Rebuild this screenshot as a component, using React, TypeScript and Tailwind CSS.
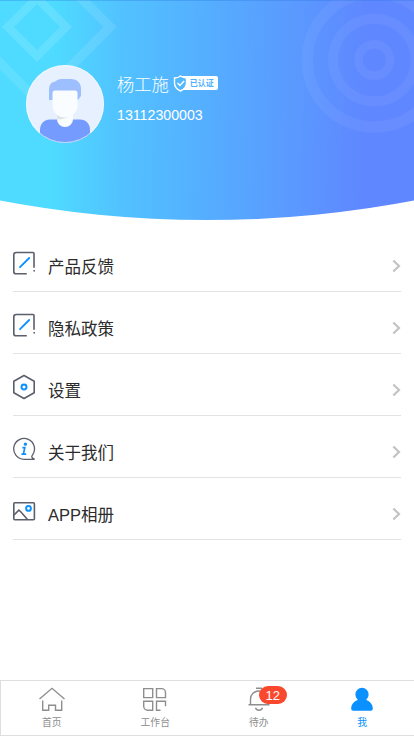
import type { ReactNode } from 'react'

const EditIcon = () => (
  <svg width="24" height="26" viewBox="0 0 24 26" fill="none">
    <path
      d="M14.8 23.8H4.2a2.4 2.4 0 0 1-2.4-2.4V4.9a2.4 2.4 0 0 1 2.4-2.4H21a1 1 0 0 1 1 1v14.3M22.2 20v1.6"
      stroke="#5b5e6b"
      strokeWidth="1.6"
    />
    <path d="M8 17.2l9.2-9.2" stroke="#0a90ff" strokeWidth="1.8" strokeLinecap="round" />
  </svg>
)

const SettingIcon = () => (
  <svg width="24" height="26" viewBox="0 0 24 26" fill="none">
    <path
      d="M12 1.5l10.2 5.7v11.6L12 24.5 1.8 18.8V7.2z"
      stroke="#5b5e6b"
      strokeWidth="1.6"
      strokeLinejoin="round"
    />
    <circle cx="12" cy="13" r="2.5" stroke="#0a90ff" strokeWidth="1.9" />
  </svg>
)

const AboutIcon = () => (
  <svg width="24" height="26" viewBox="0 0 24 26" fill="none">
    <path
      d="M22.6 23.3H12A10.4 10.4 0 1 1 20.6 18.9Q19.4 20.4 20 21.4T22.6 23.3z"
      stroke="#5b5e6b"
      strokeWidth="1.3"
    />
    <circle cx="13.4" cy="8.2" r="1.6" fill="#0a90ff" />
    <path d="M10.4 11.7h2.4l-1.4 6.4h2.8M9.4 18.1h2" stroke="#0a90ff" strokeWidth="1.7" />
  </svg>
)

const PhotoIcon = () => (
  <svg width="24" height="26" viewBox="0 0 24 26" fill="none">
    <rect x="1.8" y="4.8" width="20.6" height="17" rx="1" stroke="#5b5e6b" strokeWidth="1.6" />
    <path d="M2 17l4.9-4.8 1.8 1.5 6.6 7.6" stroke="#5b5e6b" strokeWidth="1.6" />
    <circle cx="16.5" cy="10.4" r="2.4" stroke="#0a90ff" strokeWidth="1.9" />
  </svg>
)

const menu = [
  { label: '产品反馈', icon: <EditIcon /> },
  { label: '隐私政策', icon: <EditIcon /> },
  { label: '设置', icon: <SettingIcon /> },
  { label: '关于我们', icon: <AboutIcon /> },
  { label: 'APP相册', icon: <PhotoIcon /> },
]

const Avatar = () => (
  <svg width="78" height="78" viewBox="0 0 78 78" className="shrink-0">
    <defs>
      <clipPath id="avatar">
        <circle cx="39" cy="39" r="39" />
      </clipPath>
    </defs>
    <g clipPath="url(#avatar)">
      <rect width="78" height="78" fill="#e7f0ff" />
      <path d="M14 80V65c0-6 4-10.5 10-10.5h30c6 0 10 4.5 10 10.5v15z" fill="#759bff" />
      <path d="M31 50h16v4.5a8 7.5 0 0 1-16 0z" fill="#fafdff" />
      <path d="M31 50h14q-5 4.5-14 4.5z" fill="#dde5e8" />
      <path
        d="M23 35V25c0-6 3-8 6.5-8.5C31 14.5 34 14 37 14h8c6 0 10 4 10 9.5V31l-3 4z"
        fill="#9dbfff"
      />
      <path
        d="M26.5 28q0-2.5 2.5-2.5h20q2.5 0 2.5 2.5v13c0 6-5.5 11.5-12.5 11.5S26.5 47 26.5 41z"
        fill="#fafdff"
      />
    </g>
    <circle cx="39" cy="39" r="38.5" fill="none" stroke="#fff" strokeOpacity=".55" />
  </svg>
)

const Header = () => (
  <header className="relative h-[220px] overflow-hidden bg-[linear-gradient(91deg,#4edbff_0%,#4edbff_13%,#52c1ff_30%,#55aeff_50%,#5a9aff_70%,#5f87ff_88%,#5f87ff_100%)] [clip-path:circle(1108px_at_50%_-888px)]">
    <svg
      className="absolute left-0 top-0"
      width="414"
      height="220"
      viewBox="0 0 414 220"
      fill="none"
      stroke="#fff"
    >
      <path d="M37-2l29 29-29 29L8 27z" strokeWidth="8.5" strokeOpacity=".12" />
      <path d="M37-46l73 73-73 73-73-73z" strokeWidth="9.5" strokeOpacity=".1" />
      <g strokeOpacity=".05">
        <circle cx="374.3" cy="60" r="15.7" strokeWidth="8.7" />
        <circle cx="374.3" cy="60" r="41.3" strokeWidth="10" />
        <circle cx="374.3" cy="60" r="67" strokeWidth="11.5" />
      </g>
      <path d="M0 .5h414" stroke="#2874dc" strokeOpacity=".3" />
    </svg>
    <div className="relative flex pl-[26px] pt-[65px]">
      <Avatar />
      <div className="ml-[13px] pt-[8px] text-white">
        <div className="flex items-center">
          <span className="text-[17.3px] font-light leading-[25px]">杨工施</span>
          <span className="relative -mt-[5px] ml-[11px] flex h-[14px] w-[38px] items-center justify-end rounded-[2px] bg-white pr-[4px] pt-[1px] text-[8px] font-bold leading-none text-[#4db2ff]">
            <svg
              className="absolute -left-[7px] -top-[1px]"
              width="15"
              height="17"
              viewBox="0 0 15 17"
              fill="none"
            >
              <path
                d="M7.5 1Q10 3 13.5 3v5c0 4-2.8 6.5-6 8-3.2-1.5-6-4-6-8V3Q5 3 7.5 1z"
                fill="#52b9ff"
                stroke="#fff"
                strokeWidth="1.4"
              />
              <path d="M4.5 8l2.4 2.5 4.2-4.4" stroke="#fff" strokeWidth="1.5" />
            </svg>
            已认证
          </span>
        </div>
        <div className="mt-[8px] text-[14.2px] leading-[18px]">13112300003</div>
      </div>
    </div>
  </header>
)

const Tab = ({ label, active, children }: { label: string; active?: boolean; children: ReactNode }) => (
  <div
    className={`flex flex-1 flex-col items-center pt-[5px] text-[9.8px] leading-[14px] ${
      active ? 'text-[#0a90ff]' : 'text-[#8e8e8e]'
    }`}
  >
    <div className="relative h-[28px] w-[28px]">{children}</div>
    <span className="mt-[2px]">{label}</span>
  </div>
)

const tabSvg = {
  width: 28,
  height: 28,
  viewBox: '0 0 28 28',
  fill: 'none',
  stroke: '#8e8e8e',
  strokeWidth: 1.4,
}

export default function App() {
  return (
    <div className="flex h-screen w-full flex-col overflow-hidden bg-white font-['Liberation_Sans','Noto_Sans_CJK_SC',sans-serif]">
      <Header />
      <main className="flex-1 px-[13px] pt-[10px]">
        {menu.map((item) => (
          <div
            key={item.label}
            className="flex h-[62px] items-center border-b border-[#e3e3e3] text-[#2b2b2b]"
          >
            <div className="-ml-[1px] mt-[4px]">{item.icon}</div>
            <span className="ml-[12px] mt-[12px] flex-1 text-[16.5px] leading-[24px]">{item.label}</span>
            <svg width="9" height="14" viewBox="0 0 9 14" className="mt-[10px]" fill="none">
              <path d="M1.3 1.5L7 7l-5.7 5.5" stroke="#c3c3c6" strokeWidth="2.2" />
            </svg>
          </div>
        ))}
      </main>
      <nav className="flex h-[56px] border-y border-[#dedede] shadow-[inset_1px_0_#dedede]">
        <Tab label="首页">
          <svg {...tabSvg}>
            <path d="M1.5 13L14 2.3 26.5 13M4.7 14.5v9.7h6v-5h6.8v5h6.2v-9.7" />
          </svg>
        </Tab>
        <Tab label="工作台">
          <svg {...tabSvg}>
            <path d="M2.7 2.6h9v9h-9zM15.5 2.6h5a4 4 0 0 1 4 4v5h-9zM2.7 15.3h9v9h-5a4 4 0 0 1-4-4zM19.5 24.3h-4v-9h9v5" />
          </svg>
        </Tab>
        <Tab label="待办">
          <svg {...tabSvg}>
            <path d="M11 2.3h6M3.5 18.7h21M5.5 18.7V13a8.5 8 0 0 1 17 0v5.7M10.5 21.7q.8 2.5 3.5 2.5t3.5-2.5" />
          </svg>
          <span className="absolute left-[14px] top-0 flex h-[18px] w-[28px] items-center justify-center rounded-full bg-[#fa482e] text-[13px] leading-none text-white">
            12
          </span>
        </Tab>
        <Tab label="我" active>
          <svg width="28" height="28" viewBox="0 0 28 28" fill="#0a90ff">
            <path d="M14 1.8a6.6 6.5 0 0 1 6.6 6.5c0 2.4-1 4-2.5 5.6 4 1.4 6.7 4.4 6.7 8.7 0 1.4-.8 2.2-2 2.2H5.2c-1.2 0-2-.8-2-2.2 0-4.3 2.7-7.3 6.7-8.7-1.5-1.6-2.5-3.2-2.5-5.6A6.6 6.5 0 0 1 14 1.8z" />
          </svg>
        </Tab>
      </nav>
    </div>
  )
}
